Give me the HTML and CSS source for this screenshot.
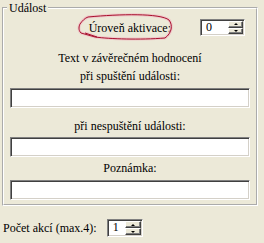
FILE: index.html
```html
<!DOCTYPE html>
<html lang="cs">
<head>
<meta charset="utf-8">
<link rel="stylesheet" href="styles.css">
</head>
<body>
<fieldset class="group">
  <legend class="group-title">Událost</legend>
  <div class="level-row">
    <span class="level-label">Úroveň aktivace:<svg class="mark" width="98" height="30" viewBox="0 0 98 30"><path class="mark-halo" d="M10 4 C42 1 82 0 91 7 C95 12 94 20 87 25 C62 27 32 26 17 24 L3 20 C0 17 1 13 2 11 C4 8 7 5 10 4 Z M7 20 L19 24"/><path class="mark-line" d="M10 4 C42 1 82 0 91 7 C95 12 94 20 87 25 C62 27 32 26 17 24 L3 20 C0 17 1 13 2 11 C4 8 7 5 10 4 Z M7 20 L19 24"/></svg></span>
    <div class="spin spin-level">
      <span class="spin-value">0</span>
      <span class="spin-buttons"><span class="spin-btn"><span class="arrow-up"></span></span><span class="spin-btn"><span class="arrow-down"></span></span></span>
    </div>
  </div>
  <div class="caption caption-head">Text v závěrečném hodnocení</div>
  <div class="caption caption-first">při spuštění události:</div>
  <div class="field"></div>
  <div class="caption caption-gap">při nespuštění události:</div>
  <div class="field field-second"></div>
  <div class="caption caption-note">Poznámka:</div>
  <div class="field"></div>
</fieldset>
<div class="count-row">
  <span class="count-label">Počet akcí (max.4):</span>
  <div class="spin spin-count">
    <span class="spin-value">1</span>
    <span class="spin-buttons"><span class="spin-btn"><span class="arrow-up"></span></span><span class="spin-btn"><span class="arrow-down"></span></span></span>
  </div>
</div>
</body>
</html>
```
FILE: styles.css
```css
html, body {
  margin: 0;
  padding: 0;
  background: #ECE9D8;
}
body {
  font-family: "Liberation Serif", "Times New Roman", serif;
  font-size: 12px;
  color: #000;
  width: 264px;
  height: 243px;
  overflow: hidden;
}
.group {
  box-sizing: border-box;
  width: 256px;
  margin: 0 0 0 2px;
  padding: 3px 6px 4px 6px;
  border: 2px groove #fff;
  min-width: 0;
}
.group-title {
  padding: 0 2px;
  margin-left: -3px;
  line-height: 16px;
}
.level-row {
  display: flex;
  justify-content: flex-end;
  align-items: center;
  gap: 29px;
  padding-right: 5px;
  height: 17px;
}
.level-label {
  position: relative;
  line-height: 16px;
  white-space: nowrap;
}
.mark {
  position: absolute;
  left: -11px;
  top: -7px;
  overflow: visible;
}
.mark-halo {
  fill: none;
  stroke: #f2b4c0;
  stroke-width: 3;
  opacity: 0.6;
}
.mark-line {
  fill: none;
  stroke: #a8102e;
  stroke-width: 1;
}
.spin {
  box-sizing: border-box;
  display: flex;
  background: #fff;
  border: 1px solid;
  border-color: #808080 #fff #fff #808080;
  box-shadow: inset 1px 1px 0 #404040, inset -1px -1px 0 #D4D0C8;
  padding: 2px;
}
.spin-level {
  width: 45px;
  height: 17px;
}
.spin-count {
  width: 36px;
  height: 18px;
}
.spin-value {
  flex: 1;
  line-height: 11px;
  padding-left: 3px;
  font-size: 12px;
}
.spin-buttons {
  display: flex;
  flex-direction: column;
  width: 15px;
  margin: -1px -1px -1px 0;
}
.spin-count .spin-buttons {
  width: 16px;
}
.spin-btn {
  flex: 1;
  display: flex;
  align-items: center;
  justify-content: center;
  background: #ECE9D8;
  border: 1px solid;
  border-color: #fff #404040 #404040 #fff;
  box-shadow: inset -1px -1px 0 #808080;
}
.arrow-up,
.arrow-down {
  width: 0;
  height: 0;
  border-left: 2px solid transparent;
  border-right: 2px solid transparent;
}
.arrow-up {
  border-bottom: 2px solid #000;
}
.arrow-down {
  border-top: 2px solid #000;
}
.caption {
  text-align: center;
  line-height: 16px;
}
.caption-head {
  margin-top: 14px;
}
.caption-first {
  margin-top: 2px;
}
.caption-gap {
  margin-top: 10px;
}
.caption-note {
  margin-top: 3px;
}
.field {
  box-sizing: border-box;
  height: 20px;
  margin-top: 4px;
  background: #fff;
  border: 1px solid;
  border-color: #808080 #fff #fff #808080;
  box-shadow: inset 1px 1px 0 #404040, inset -1px -1px 0 #D4D0C8;
}
.field-second {
  margin-top: 3px;
}
.count-row {
  display: flex;
  align-items: center;
  gap: 10px;
  margin-top: 13px;
  padding-left: 3px;
  height: 18px;
}
.count-label {
  line-height: 16px;
  white-space: nowrap;
}
```
